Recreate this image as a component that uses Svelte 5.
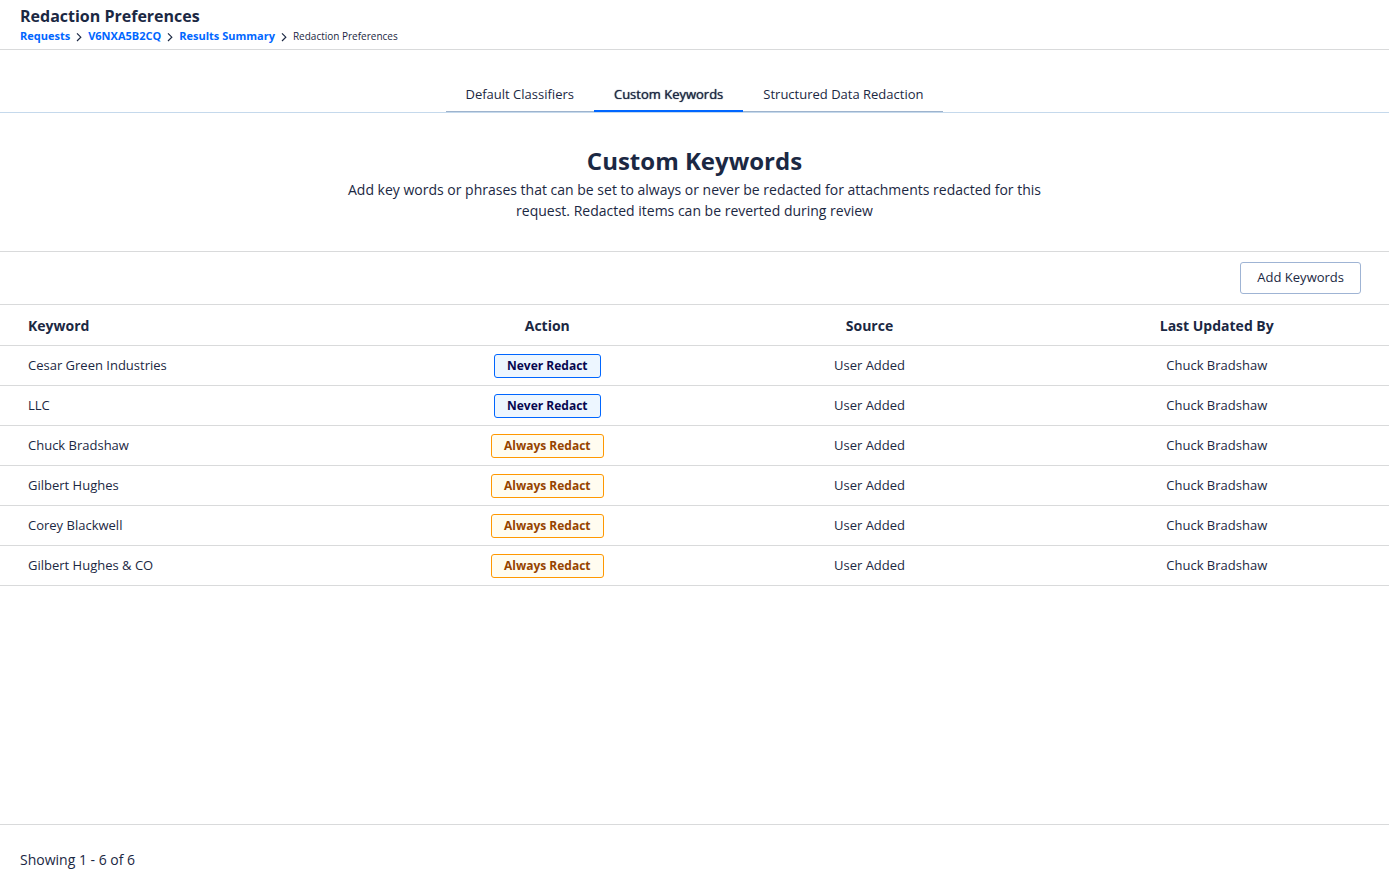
<script lang="ts">
	type Action = 'never' | 'always';

	interface Keyword {
		name: string;
		action: Action;
		source: string;
		updatedBy: string;
	}

	const actionLabels: Record<Action, string> = {
		never: 'Never Redact',
		always: 'Always Redact'
	};

	const crumbs = ['Requests', 'V6NXA5B2CQ', 'Results Summary'];
	const tabs = ['Default Classifiers', 'Custom Keywords', 'Structured Data Redaction'];

	let activeTab = $state('Custom Keywords');

	let keywords: Keyword[] = $state([
		{ name: 'Cesar Green Industries', action: 'never', source: 'User Added', updatedBy: 'Chuck Bradshaw' },
		{ name: 'LLC', action: 'never', source: 'User Added', updatedBy: 'Chuck Bradshaw' },
		{ name: 'Chuck Bradshaw', action: 'always', source: 'User Added', updatedBy: 'Chuck Bradshaw' },
		{ name: 'Gilbert Hughes', action: 'always', source: 'User Added', updatedBy: 'Chuck Bradshaw' },
		{ name: 'Corey Blackwell', action: 'always', source: 'User Added', updatedBy: 'Chuck Bradshaw' },
		{ name: 'Gilbert Hughes & CO', action: 'always', source: 'User Added', updatedBy: 'Chuck Bradshaw' }
	]);
</script>

<div class="page">
	<header class="page-header">
		<h1>Redaction Preferences</h1>
		<nav class="breadcrumbs" aria-label="Breadcrumb">
			{#each crumbs as crumb}
				<a href="#/">{crumb}</a>
				<svg width="6" height="12" viewBox="0 0 6 12" fill="none" stroke="currentColor" stroke-width="1.2" aria-hidden="true">
					<path d="M1 3.4 4.8 7.2 1 11" />
				</svg>
			{/each}
			<span aria-current="page">Redaction Preferences</span>
		</nav>
	</header>

	<div class="tab-bar">
		<div class="tabs" role="tablist">
			{#each tabs as tab}
				<button
					role="tab"
					class="tab"
					class:active={tab === activeTab}
					aria-selected={tab === activeTab}
					onclick={() => (activeTab = tab)}
				>
					{tab}
				</button>
			{/each}
		</div>
	</div>

	<main>
		<section class="intro">
			<h2>Custom Keywords</h2>
			<p>
				Add key words or phrases that can be set to always or never be redacted for attachments
				redacted for this request. Redacted items can be reverted during review
			</p>
		</section>

		<div class="toolbar">
			<button class="add">Add Keywords</button>
		</div>

		<table>
			<thead>
				<tr>
					<th class="col-keyword">Keyword</th>
					<th class="col-action">Action</th>
					<th class="col-source">Source</th>
					<th>Last Updated By</th>
				</tr>
			</thead>
			<tbody>
				{#each keywords as keyword}
					<tr>
						<td class="col-keyword">{keyword.name}</td>
						<td><span class="badge {keyword.action}">{actionLabels[keyword.action]}</span></td>
						<td>{keyword.source}</td>
						<td>{keyword.updatedBy}</td>
					</tr>
				{/each}
			</tbody>
		</table>
	</main>

	<footer>Showing 1 - {keywords.length} of {keywords.length}</footer>
</div>

<style>
	:global(body) {
		background: #fff;
	}

	.page {
		display: flex;
		flex-direction: column;
		min-height: 100vh;
		color: #1b2843;
		font-family: 'Open Sans', 'Noto Sans', sans-serif;
		font-size: 13px;
	}

	.page-header {
		padding: 6px 20px 5px;
		border-bottom: 1px solid #d9dadb;
	}

	h1,
	h2,
	p {
		margin: 0;
	}

	h1 {
		font-size: 16px;
		line-height: 20px;
	}

	.breadcrumbs {
		display: flex;
		align-items: center;
		gap: 6px;
		margin-top: 2px;
		font-size: 10px;
		line-height: 16px;
	}

	.breadcrumbs a {
		color: #0066ff;
		font-size: 11px;
		font-weight: 700;
		text-decoration: none;
	}

	.tab-bar {
		display: flex;
		justify-content: center;
		padding-top: 28px;
		border-bottom: 1px solid #c5d9ec;
	}

	.tabs {
		display: flex;
	}

	.tab {
		padding: 6px 20px 7px;
		border: 0;
		box-shadow: inset 0 -1px #9db3cd;
		background: none;
		color: inherit;
		font: inherit;
		line-height: 21px;
		cursor: pointer;
	}

	.tab.active {
		box-shadow: inset 0 -2px #0066ff;
		text-shadow: 0 0 1px #1b2843;
	}

	.intro {
		padding: 30px 20px;
		text-align: center;
	}

	h2 {
		font-size: 24px;
		line-height: 36px;
	}

	.intro p {
		max-width: 700px;
		margin: 0 auto;
		font-size: 14px;
		line-height: 21px;
	}

	.toolbar {
		display: flex;
		justify-content: flex-end;
		padding: 10px 28px;
		border-top: 1px solid #d9dadb;
		border-bottom: 1px solid #d9dadb;
	}

	.add {
		padding: 5px 16px 6px;
		border: 1px solid #9fb4d4;
		border-radius: 3px;
		background: #fff;
		color: inherit;
		font: inherit;
		line-height: 19px;
		cursor: pointer;
	}

	table {
		width: 100%;
		table-layout: fixed;
		border-collapse: separate;
		border-spacing: 0;
	}

	th,
	td {
		height: 39px;
		padding: 0;
		border-bottom: 1px solid #d9dadb;
		line-height: 19px;
		text-align: center;
	}

	th {
		height: 40px;
		font-size: 14px;
	}

	.col-keyword {
		width: 28.8%;
		padding-left: 28px;
		box-sizing: border-box;
		text-align: left;
	}

	.col-action {
		width: 21.2%;
	}

	.col-source {
		width: 25.2%;
	}

	.badge {
		display: inline-block;
		padding: 0 12px;
		border: 1px solid;
		border-radius: 3px;
		font-size: 12px;
		font-weight: 700;
		line-height: 22px;
		vertical-align: middle;
	}

	.badge.never {
		border-color: #0066ff;
		background: #edf6ff;
		color: #07074f;
	}

	.badge.always {
		border-color: #ff9800;
		background: #fffcf0;
		color: #964400;
	}

	footer {
		margin-top: auto;
		padding: 24px 20px 20px;
		border-top: 1px solid #d9dadb;
		font-size: 14px;
		line-height: 22px;
	}
</style>
